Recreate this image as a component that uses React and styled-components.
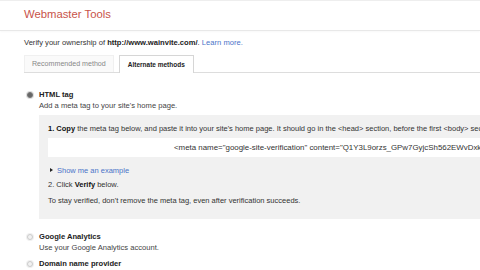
import React from 'react';
import styled, { createGlobalStyle } from 'styled-components';

const GlobalStyle = createGlobalStyle`
  html, body {
    margin: 0;
    padding: 0;
    background: #fff;
  }
  body {
    font-family: "Liberation Sans", Arial, sans-serif;
    color: #333;
    overflow: hidden;
  }
`;

const Page = styled.div`
  width: 480px;
  height: 270px;
  overflow: hidden;
  border-top: 1px solid #eee;
  box-sizing: border-box;
`;

const Header = styled.div`
  height: 30px;
  padding: 6px 0 0 24px;
  box-sizing: border-box;
  border-bottom: 1px solid #e8e8e8;
  box-shadow: 0 1px 2px rgba(0, 0, 0, 0.03);
`;

const Title = styled.h1`
  margin: 0;
  font-size: 11.3px;
  line-height: 14px;
  font-weight: normal;
  color: #c8534a;
`;

const Content = styled.div`
  padding-left: 24px;
`;

const Intro = styled.p`
  margin: 7px 0 0;
  font-size: 7.6px;
  color: #333;
  line-height: 10px;

  b {
    color: #222;
  }
`;

const Link = styled.a`
  color: #4a73c8;
  text-decoration: none;
`;

const TabBar = styled.div`
  display: flex;
  gap: 5px;
  margin-top: 7px;
  border-bottom: 1px solid #ddd;
  height: 17px;
`;

const Tab = styled.div`
  padding: 0 ${p => (p.$active ? 8 : 7)}px;
  height: ${p => (p.$active ? 18 : 17)}px;
  display: flex;
  align-items: center;
  font-size: ${p => (p.$active ? 6.5 : 7.1)}px;
  box-sizing: border-box;
  color: ${p => (p.$active ? '#222' : '#888')};
  font-weight: ${p => (p.$active ? 'bold' : 'normal')};
  background: ${p => (p.$active ? '#fff' : '#fafafa')};
  border: 1px solid ${p => (p.$active ? '#d6d6d6' : '#f0f0f0')};
  border-bottom: none;
`;

const Methods = styled.div`
  margin-top: 17px;
  display: flex;
  flex-direction: column;
`;

const Method = styled.div`
  display: flex;
  gap: 6px;
  margin-bottom: ${p => p.$gap}px;
`;

const Radio = styled.span`
  flex: none;
  width: 6px;
  height: 6px;
  margin-top: 2px;
  margin-left: 3px;
  border-radius: 50%;
  box-sizing: border-box;
  border: 1px solid ${p => (p.$checked ? '#777' : '#ccc')};
  background: ${p => (p.$checked ? '#666' : '#f2f2f2')};
  box-shadow: ${p => (p.$checked ? '0 0 0 1px #ddd' : '0 0 0 1px #f0f0f0')};
`;

const MethodBody = styled.div`
  flex: 1;
  min-width: 0;
`;

const MethodName = styled.div`
  font-size: 7.6px;
  font-weight: bold;
  color: #222;
  line-height: 10px;
`;

const MethodDesc = styled.div`
  font-size: 7.6px;
  color: #444;
  line-height: 11px;
`;

const InfoBox = styled.div`
  margin-top: 4px;
  background: #f1f1f1;
  padding: 9px 0 0 9px;
  height: 104px;
  box-sizing: border-box;
  white-space: nowrap;
  overflow: hidden;
`;

const Step = styled.div`
  font-size: 7.5px;
  color: #333;
  line-height: 10px;
  margin-top: ${p => p.$top || 0}px;

  b {
    color: #111;
  }
`;

const CodeField = styled.div`
  margin-top: 4px;
  height: 19px;
  background: #fff;
  display: flex;
  align-items: center;
  padding-left: 126px;
  font-size: 7.9px;
  color: #333;
`;

const Expander = styled.div`
  margin-top: 8px;
  height: 10px;
  display: flex;
  align-items: center;
  gap: 4px;
  font-size: 7.5px;
`;

const Arrow = styled.span`
  width: 0;
  height: 0;
  margin-left: 2px;
  border-left: 3px solid #222;
  border-top: 2.5px solid transparent;
  border-bottom: 2.5px solid transparent;
`;

export default function App() {
  return (
    <Page>
      <GlobalStyle />
      <Header>
        <Title>Webmaster Tools</Title>
      </Header>
      <Content>
        <Intro>
          Verify your ownership of <b>http://www.wainvite.com/</b>.{' '}
          <Link href="#">Learn more.</Link>
        </Intro>
        <TabBar>
          <Tab>Recommended method</Tab>
          <Tab $active>Alternate methods</Tab>
        </TabBar>
        <Methods>
          <Method $gap={13}>
            <Radio $checked />
            <MethodBody>
              <MethodName>HTML tag</MethodName>
              <MethodDesc>Add a meta tag to your site's home page.</MethodDesc>
              <InfoBox>
                <Step>
                  <b>1. Copy</b> the meta tag below, and paste it into your site's home page. It
                  should go in the &lt;head&gt; section, before the first &lt;body&gt; section.
                </Step>
                <CodeField>
                  &lt;meta name="google-site-verification" content="Q1Y3L9orzs_GPw7GyjcSh562EWvDxk3" /&gt;
                </CodeField>
                <Expander>
                  <Arrow />
                  <Link href="#">Show me an example</Link>
                </Expander>
                <Step $top={5}>
                  2. Click <b>Verify</b> below.
                </Step>
                <Step $top={6}>
                  To stay verified, don't remove the meta tag, even after verification succeeds.
                </Step>
              </InfoBox>
            </MethodBody>
          </Method>
          <Method $gap={6}>
            <Radio />
            <MethodBody>
              <MethodName>Google Analytics</MethodName>
              <MethodDesc>Use your Google Analytics account.</MethodDesc>
            </MethodBody>
          </Method>
          <Method $gap={0}>
            <Radio />
            <MethodBody>
              <MethodName>Domain name provider</MethodName>
            </MethodBody>
          </Method>
        </Methods>
      </Content>
    </Page>
  );
}
